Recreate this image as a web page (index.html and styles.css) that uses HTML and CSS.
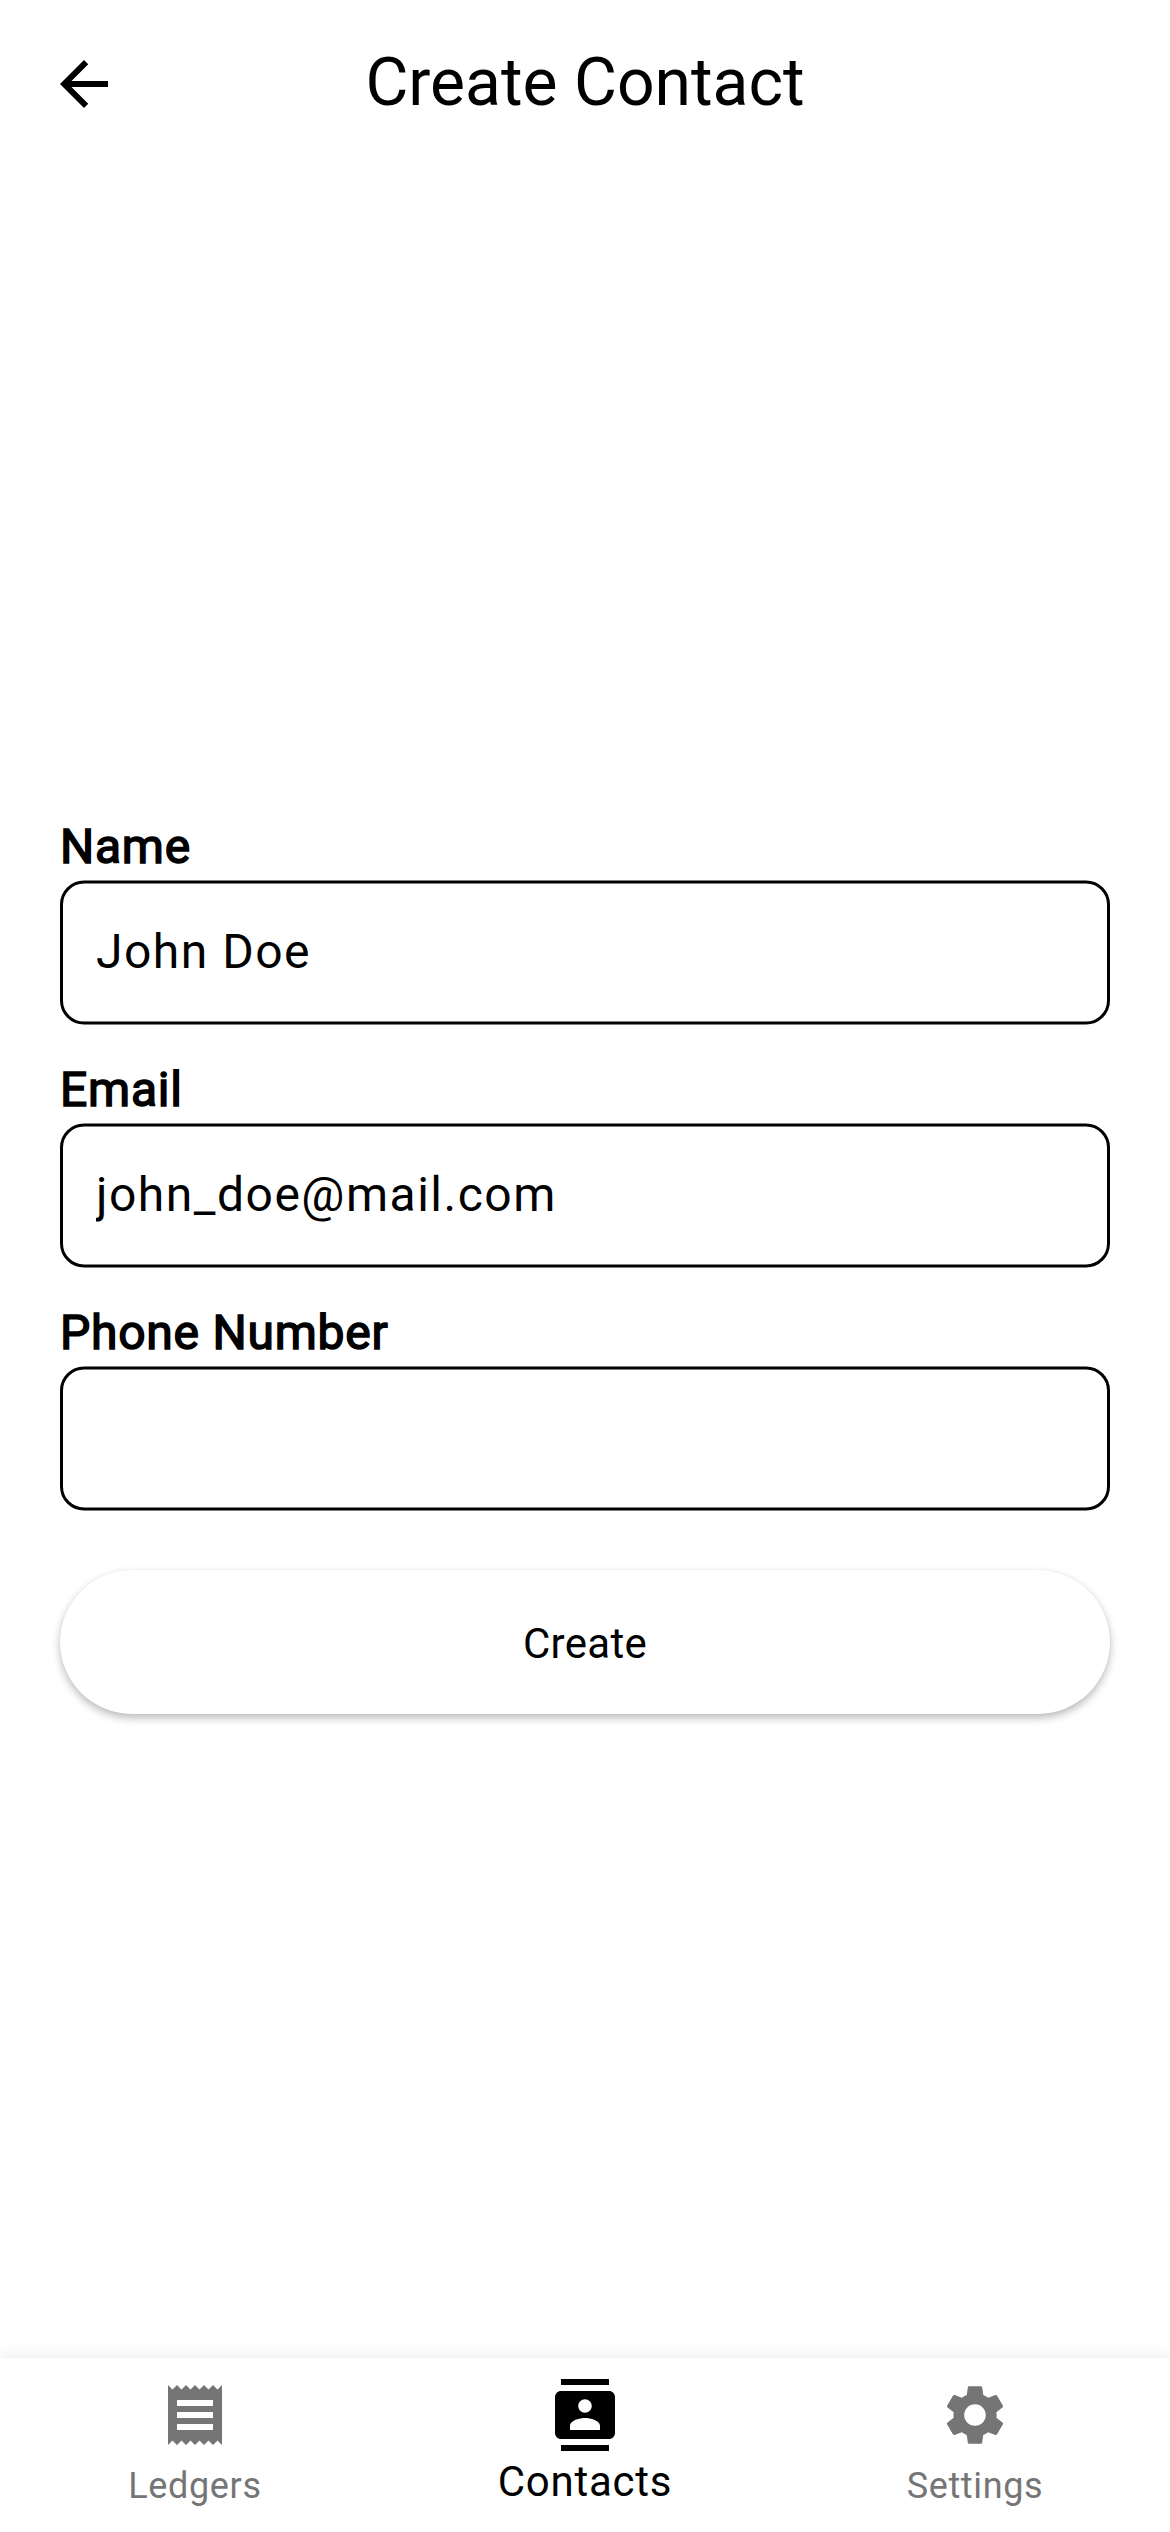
FILE: index.html
```html
<!DOCTYPE html>
<html lang="en">
<head>
<meta charset="utf-8">
<title>Create Contact</title>
<link rel="stylesheet" href="styles.css">
</head>
<body>
<div class="screen">
  <header class="app-bar">
    <button class="back" aria-label="Back">
      <svg class="icon" viewBox="0 0 24 24"><path d="M20 11H7.83l5.59-5.59L12 4l-8 8 8 8 1.41-1.41L7.83 13H20v-2z"/></svg>
    </button>
    <h1 class="title">Create Contact</h1>
  </header>

  <main class="form">
    <div class="group">
      <label class="label" for="name">Name</label>
      <input class="field" id="name" type="text" value="John Doe">
    </div>
    <div class="group">
      <label class="label" for="email">Email</label>
      <input class="field" id="email" type="text" value="john_doe@mail.com">
    </div>
    <div class="group">
      <label class="label" for="phone">Phone Number</label>
      <input class="field" id="phone" type="text">
    </div>
    <button class="submit">Create</button>
  </main>

  <nav class="tabs">
    <a class="tab">
      <svg class="icon" viewBox="0 0 24 24"><path d="M18 17H6v-2h12v2zm0-4H6v-2h12v2zm0-4H6V7h12v2zM3 22l1.5-1.5L6 22l1.5-1.5L9 22l1.5-1.5L12 22l1.5-1.5L15 22l1.5-1.5L18 22l1.5-1.5L21 22V2l-1.5 1.5L18 2l-1.5 1.5L15 2l-1.5 1.5L12 2l-1.5 1.5L9 2 7.500 3.500 6 2 4.500 3.500 3 2v20z"/></svg>
      <span class="tab-label">Ledgers</span>
    </a>
    <a class="tab tab-active">
      <svg class="icon" viewBox="0 0 24 24"><path d="M20 0H4v2h16V0zM4 24h16v-2H4v2zM20 4H4c-1.100 0-2 .9-2 2v12c0 1.100.9 2 2 2h16c1.100 0 2-.9 2-2V6c0-1.100-.9-2-2-2zm-8 2.750c1.240 0 2.250 1.010 2.250 2.250s-1.010 2.250-2.250 2.250S9.750 10.240 9.750 9 10.760 6.750 12 6.750zM17 17H7v-1.500c0-1.670 3.330-2.500 5-2.500s5 .83 5 2.500V17z"/></svg>
      <span class="tab-label">Contacts</span>
    </a>
    <a class="tab">
      <svg class="icon" viewBox="0 0 24 24"><path d="M19.140 12.940c.04-.3.060-.61.060-.94 0-.32-.02-.64-.07-.94l2.030-1.580c.18-.14.230-.41.120-.61l-1.920-3.320c-.12-.22-.37-.29-.59-.22l-2.390.96c-.5-.38-1.030-.7-1.620-.94l-.36-2.540c-.04-.24-.24-.41-.48-.41h-3.840c-.24 0-.43.17-.47.41l-.36 2.540c-.59.24-1.130.57-1.620.94l-2.390-.96c-.22-.08-.47 0-.59.22L2.740 8.870c-.12.21-.08.47.12.61l2.030 1.580c-.05.3-.09.63-.09.94s.02.64.07.94l-2.030 1.580c-.18.14-.23.41-.12.61l1.920 3.320c.12.22.37.29.59.22l2.390-.96c.5.38 1.030.7 1.620.94l.36 2.540c.05.24.24.41.48.41h3.840c.24 0 .44-.17.47-.41l.36-2.540c.59-.24 1.130-.56 1.620-.94l2.390.96c.22.08.47 0 .59-.22l1.920-3.320c.12-.22.07-.47-.12-.61l-2.010-1.580zM12 15.600c-1.980 0-3.600-1.620-3.600-3.600s1.620-3.600 3.600-3.600 3.600 1.620 3.600 3.600-1.620 3.600-3.600 3.600z"/></svg>
      <span class="tab-label">Settings</span>
    </a>
  </nav>
</div>
</body>
</html>
```
FILE: styles.css
```css
* {
  box-sizing: border-box;
}

body {
  margin: 0;
  background: #fff;
  color: #000;
  font-family: Roboto, "Liberation Sans", sans-serif;
}

button,
input {
  margin: 0;
  border: 0;
  background: none;
  color: inherit;
  font: inherit;
}

.screen {
  display: flex;
  flex-direction: column;
  width: 1170px;
  height: 2532px;
  overflow: hidden;
}

.icon {
  display: block;
  width: 72px;
  height: 72px;
  fill: currentColor;
}

.app-bar {
  display: grid;
  grid-template-columns: 168px 1fr 168px;
  align-items: center;
  height: 168px;
}

.back {
  justify-self: start;
  padding: 0 0 0 48px;
}

.title {
  margin: 0;
  padding-bottom: 3px;
  font-size: 66px;
  font-weight: 400;
  line-height: 84px;
  text-align: center;
}

.form {
  display: flex;
  flex: 1;
  flex-direction: column;
  padding: 651px 60px 0;
}

.group {
  display: flex;
  flex-direction: column;
  gap: 5px;
  height: 243px;
}

.label {
  font-size: 48px;
  line-height: 56px;
  letter-spacing: 0.75px;
  -webkit-text-stroke: 1.5px #000;
}

.field {
  height: 144px;
  padding: 0 33px 3px;
  border: 3px solid #000;
  border-radius: 24px;
  outline: 0;
  font-size: 48px;
  letter-spacing: 1.5px;
  transform: translateY(0.5px);
}

.submit {
  height: 144px;
  margin-top: 22px;
  padding-top: 4px;
  border-radius: 72px;
  background: #fff;
  box-shadow: 0 4px 8px rgba(0, 0, 0, 0.27), 0 0 2px rgba(0, 0, 0, 0.06);
  font-size: 42px;
  letter-spacing: 0.3px;
}

.tabs {
  display: grid;
  grid-template-columns: repeat(3, 1fr);
  height: 174px;
  background: #fff;
  box-shadow: 0 0 16px 2px rgba(0, 0, 0, 0.08);
}

.tab {
  display: flex;
  flex-direction: column;
  align-items: center;
  padding-top: 21px;
  color: #757575;
  font-size: 36px;
  line-height: 50px;
  letter-spacing: 0.64px;
}

.tab-label {
  margin-top: 10px;
}

.tab-active {
  color: #000;
  font-size: 42px;
  letter-spacing: 0.75px;
}

.tab-active .tab-label {
  margin-top: 6px;
}
```
